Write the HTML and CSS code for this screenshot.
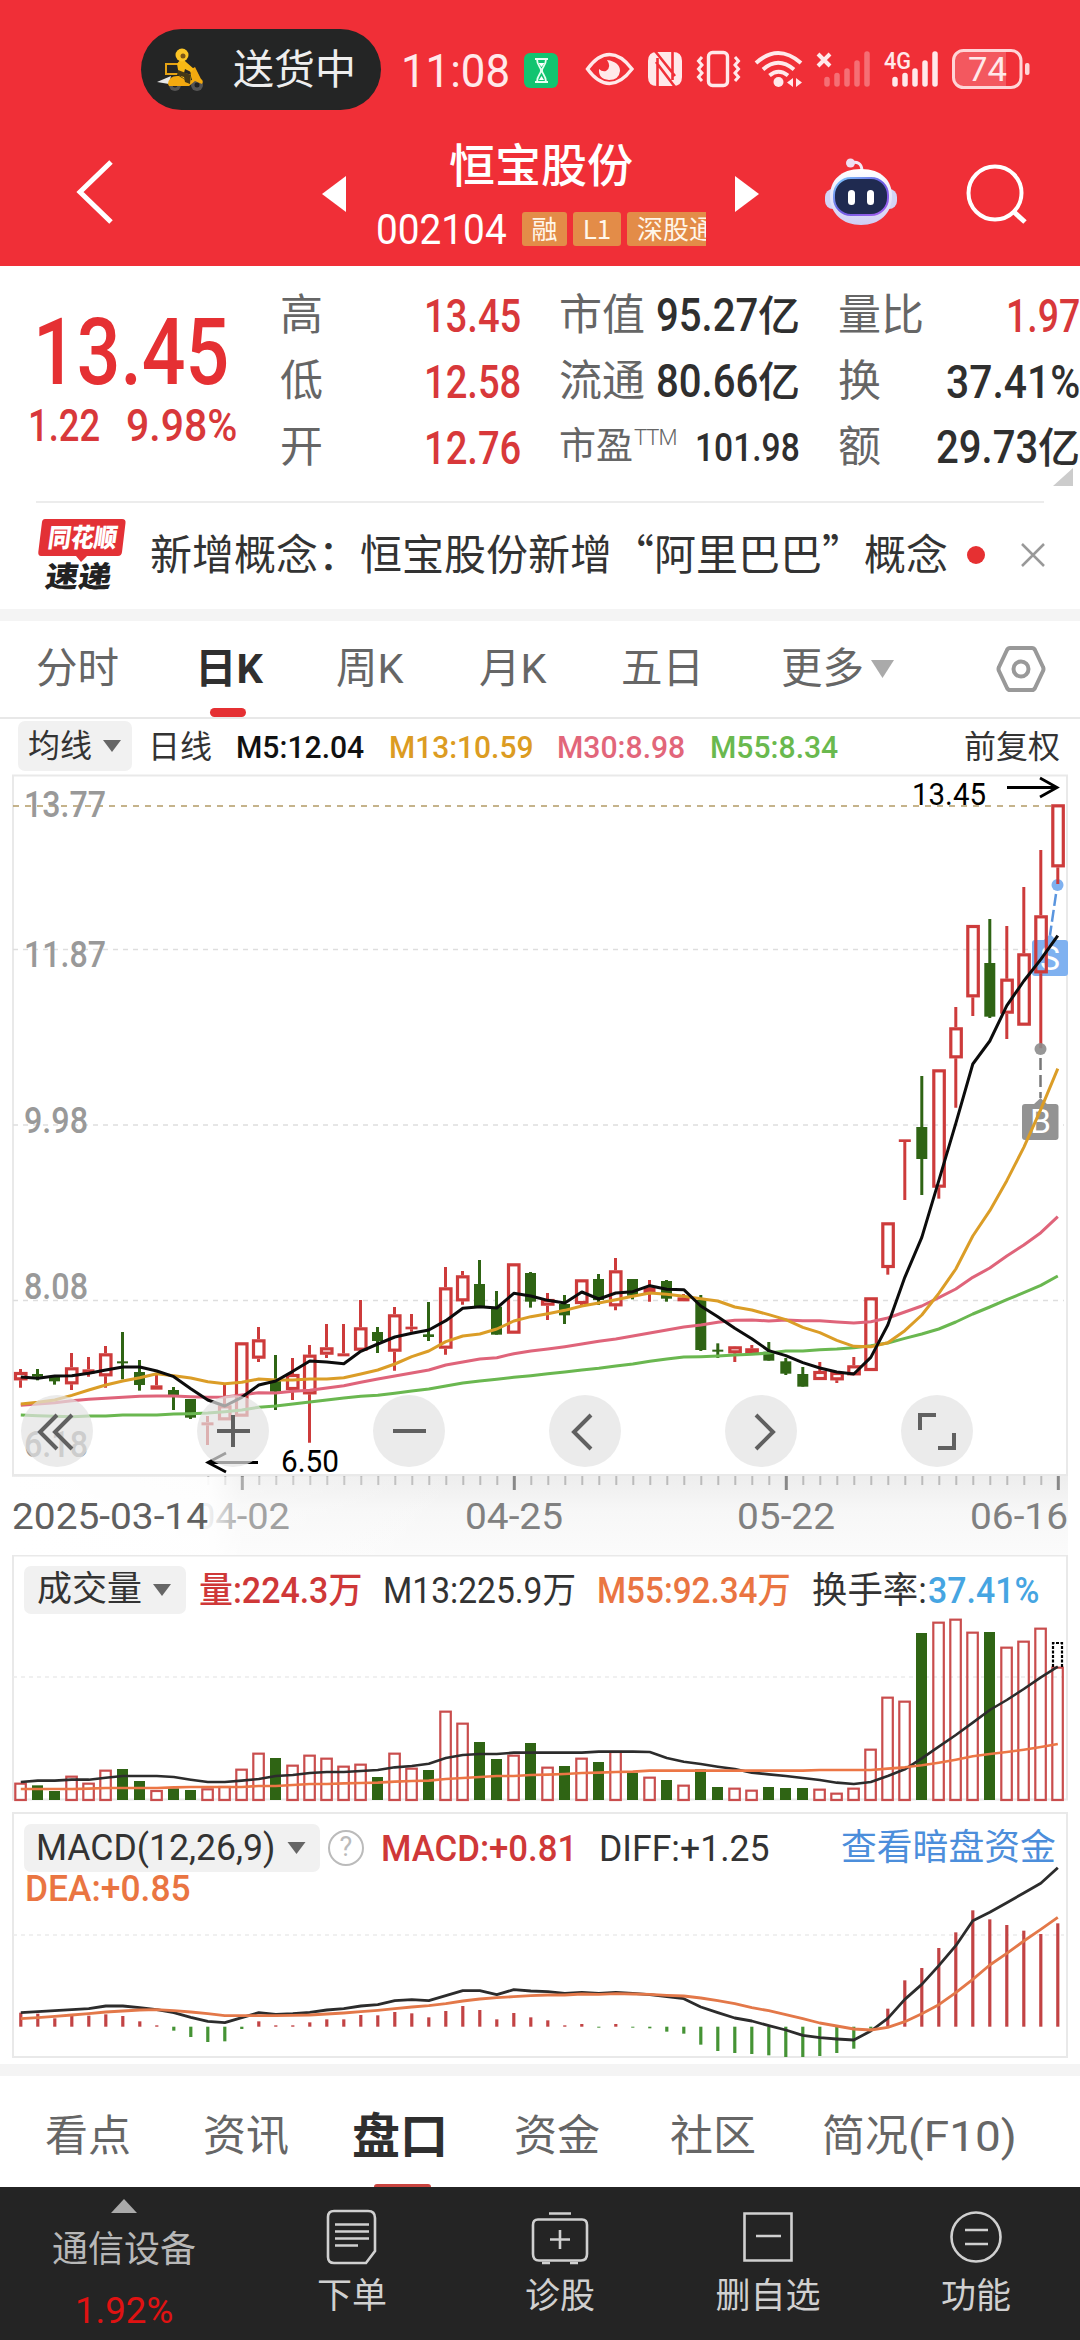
FILE: index.html
```html
<!DOCTYPE html>
<html lang="zh-CN">
<head>
<meta charset="utf-8">
<title>恒宝股份 002104</title>
<link rel="stylesheet" href="styles.css">
</head>
<body>
<header class="header">
  <div class="status">
    <div class="pill">
      <svg width="48" height="44" viewBox="0 0 48 44">
        <path d="M0 34 L14 28 L12 36 Z" fill="#e8e8e8"/>
        <circle cx="18" cy="37" r="6" fill="#555"/><circle cx="40" cy="37" r="6" fill="#555"/>
        <circle cx="18" cy="37" r="2.5" fill="#222"/><circle cx="40" cy="37" r="2.5" fill="#222"/>
        <path d="M9 16 H22 V26 H9 Z" fill="none" stroke="#e5a314" stroke-width="2"/>
        <path d="M11 36 Q12 27 22 28 L30 33 L35 32 L33 22 L38 19 L44 31 Q47 33 45 36 L38 33 L32 38 H12 Z" fill="#f3a90f"/>
        <path d="M20 16 Q25 8 29 14 L37 21 L34 24 L28 21 L27 25 L35 27 L33 35 L22 27 Z" fill="#f8b915"/>
        <path d="M21 22 L34 27 L33 36 L28 34 L27 29 L20 27 Z" fill="#443817"/>
        <circle cx="25" cy="7" r="6.5" fill="#fcc526"/><circle cx="26" cy="8" r="2.5" fill="#7d5718"/>
      </svg>
      <span>送货中</span>
    </div>
    <span class="clock" data-w="109">11:08</span>
    <svg class="sysicons" width="520" height="81" viewBox="524 29 520 81" fill="none" stroke="#ffe9ea" stroke-width="3.4">
      <rect x="524" y="53" width="34" height="35" rx="6" fill="#12c470" stroke="none"/>
      <path d="M535 59 H548 M535 82 H548 M537 59 C537 66 541 67 541 70.500 C541 74 537 75 537 82 M546 59 C546 66 542 67 542 70.500 C542 74 546 75 546 82" stroke-width="1.800" stroke="#e8fff2"/>
      <path d="M539 80 L541.500 76 L544 80Z M538.500 63 H544.500 L541.500 67Z" fill="#fff" stroke="none"/>
      <path d="M587.500 69 Q598 54.500 609.500 54.500 Q621 54.500 632 69 Q621 83.500 609.500 83.500 Q598 83.500 587.500 69 Z"/>
      <path d="M607 60 Q620 62 620 71 Q619 80 609 80 Q598 79 599 69 Q602 72 606 71 Q612 67 607 60 Z" fill="#ffe9ea" stroke="none"/>
      <path d="M657 52 H673 Q682 52 682 61 V77 Q682 86 673 86 H657 Q648 86 648 77 V61 Q648 52 657 52Z" fill="#ffe9ea" stroke="none"/>
      <path d="M657.500 87 V58 M672.500 51 V80 M655 51 L675 76 M656 62 L675 87" stroke="#f02f37" stroke-width="2.600"/>
      <rect x="708.500" y="52.500" width="19" height="33" rx="4"/>
      <path d="M702 57 L698.500 61 L702 65 L698.500 69 L702 73 L698.500 77 L702 81 M735 57 L738.500 61 L735 65 L738.500 69 L735 73 L738.500 77 L735 81" stroke-width="3"/>
      <path d="M756 63 Q778 43 801 63 M763 69.500 Q778 56 794 69.500 M769.500 75.500 Q778.500 68 788 75.500" stroke-width="4"/>
      <circle cx="778.500" cy="82" r="5" fill="#ffe9ea" stroke="none"/>
      <path d="M793 78 V87 L787 82.500Z M796 78 L802 82.500 L796 87Z" fill="#ffe9ea" stroke="none"/>
      <path d="M818 54 L830 66 M830 54 L818 66" stroke-width="4"/>
      <path d="M827 79.500 V84 M837 75.500 V84 M847 71 V84 M857 63 V84 M867 54 V84" stroke-width="5.500" stroke-linecap="round" opacity=".35"/>
      <path d="M895 79.500 V84 M905 75.500 V84 M915 71 V84 M925 63 V84 M935 54 V84" stroke-width="5.500" stroke-linecap="round"/>
      <text x="884" y="69" class="t-net" textLength="27" lengthAdjust="spacingAndGlyphs">4G</text>
      <path d="M965 51 H1006 V87 H965 Q954 87 954 76 V62 Q954 51 965 51Z" fill="#fff" fill-opacity=".2" stroke="none"/>
      <rect x="953.500" y="50.500" width="67.500" height="37" rx="10" stroke-width="3" stroke="#ffd5d7"/>
      <rect x="1025" y="63" width="4.500" height="12" rx="2" fill="#ffd5d7" stroke="none"/>
      <text x="968" y="81" class="t-bat" textLength="39" lengthAdjust="spacingAndGlyphs">74</text>
    </svg>
  </div>
  <div class="titlebar">
    <svg class="back" width="40" height="66" viewBox="0 0 40 66"><path d="M36 3 L5 33 L36 63" fill="none" stroke="#fff" stroke-width="5"/></svg>
    <svg class="prev" width="24" height="36" viewBox="0 0 24 36"><path d="M24 0 V36 L0 18Z" fill="#fff"/></svg>
    <div class="stock">
      <h1>恒宝股份</h1>
      <div class="codes">
        <span class="code" data-w="131">002104</span>
        <span class="badge b1">融</span><span class="badge b2">L1</span><span class="badge b3">深股通</span>
      </div>
    </div>
    <svg class="next" width="24" height="36" viewBox="0 0 24 36"><path d="M0 0 V36 L24 18Z" fill="#fff"/></svg>
    <svg class="robot" width="74" height="68" viewBox="0 0 74 68">
      <defs>
        <linearGradient id="shell" x1="0" y1="0" x2="0" y2="1"><stop offset="0" stop-color="#fff"/><stop offset="1" stop-color="#cfcdf4"/></linearGradient>
        <linearGradient id="rim" x1="0" y1="0" x2="1" y2="1"><stop offset="0" stop-color="#7fd0ff"/><stop offset=".5" stop-color="#6a5be0"/><stop offset="1" stop-color="#a660f0"/></linearGradient>
      </defs>
      <path d="M26 5 Q37 2 38 12" fill="none" stroke="#f4e9f7" stroke-width="3"/>
      <circle cx="26.500" cy="5" r="4.500" fill="#efdff2"/>
      <rect x="1" y="31" width="72" height="20" rx="8" fill="#d3d4f5"/>
      <path d="M37 11 C58 11 68 23 68 38 C68 56 55 67 37 67 C19 67 6 56 6 38 C6 23 16 11 37 11Z" fill="url(#shell)"/>
      <rect x="10" y="20" width="54" height="37" rx="17" fill="#1f2a50" stroke="url(#rim)" stroke-width="2"/>
      <rect x="24" y="32" width="7" height="15" rx="3.500" fill="#fff"/><rect x="43" y="32" width="7" height="15" rx="3.500" fill="#fff"/>
    </svg>
    <svg class="search" width="62" height="62" viewBox="0 0 62 62" fill="none" stroke="#fff" stroke-width="4"><circle cx="29" cy="30" r="26.500"/><path d="M48 49 L59 59" stroke-width="5"/></svg>
  </div>
</header>

<section class="quote">
  <div class="price">
    <div class="last"><span data-w="196">13.45</span></div>
    <div class="chg"><span data-w="72">1.22</span><span data-w="111">9.98%</span></div>
  </div>
  <div class="qcol">
    <div class="qrow"><label>高</label><span class="v up" data-w="97">13.45</span></div>
    <div class="qrow"><label>低</label><span class="v up" data-w="97">12.58</span></div>
    <div class="qrow"><label>开</label><span class="v up" data-w="97">12.76</span></div>
  </div>
  <div class="qcol">
    <div class="qrow"><label>市值</label><span class="v"><i data-w="102">95.27</i>亿</span></div>
    <div class="qrow"><label>流通</label><span class="v"><i data-w="102">80.66</i>亿</span></div>
    <div class="qrow"><label class="pe">市盈<sup>TTM</sup></label><span class="v sm" data-w="105">101.98</span></div>
  </div>
  <div class="qcol">
    <div class="qrow"><label>量比</label><span class="v up" data-w="74">1.97</span></div>
    <div class="qrow"><label>换</label><span class="v" data-w="134">37.41%</span></div>
    <div class="qrow"><label>额</label><span class="v"><i data-w="102">29.73</i>亿</span></div>
  </div>
  <svg class="corner" width="20" height="18" viewBox="0 0 20 18"><path d="M20 0 V18 H0Z" fill="#ccc"/></svg>
</section>

<section class="news">
  <svg class="logo" width="88" height="74" viewBox="0 0 88 74">
    <path d="M7 1 H84 Q88 1 87.500 5 L84 34 Q83.500 38 80 38 H49 L43 44 L38 38 H3 Q0 38 .3 34 L4 4 Q4.500 1 7 1Z" fill="#e33136"/>
    <g transform="skewX(-8)"><text x="13" y="29" class="t-logo" textLength="69" lengthAdjust="spacingAndGlyphs">同花顺</text>
    <text x="16" y="69" class="t-logo2" textLength="66" lengthAdjust="spacingAndGlyphs">速递</text></g>
  </svg>
  <p>新增概念：恒宝股份新增“阿里巴巴”概念</p>
  <i class="dot"></i>
  <svg class="close" width="24" height="24" viewBox="0 0 24 24"><path d="M1 1 L23 23 M23 1 L1 23" stroke="#999" stroke-width="2.500"/></svg>
</section>

<nav class="tabs">
  <a>分时</a><a class="on">日K</a><a>周K</a><a>月K</a><a>五日</a>
  <a>更多<svg width="23" height="18" viewBox="0 0 23 18"><path d="M0 0 H23 L11.500 18Z" fill="#aaa"/></svg></a>
  <svg class="hex" width="50" height="48" viewBox="0 0 50 48" fill="none" stroke="#999" stroke-width="4"><path d="M14 3 H36 Q38 3 39 5 L47 22 Q48 24 47 26 L39 43 Q38 45 36 45 H14 Q12 45 11 43 L3 26 Q2 24 3 22 L11 5 Q12 3 14 3Z"/><circle cx="25" cy="24" r="7.500"/></svg>
</nav>

<div class="malist">
  <span class="chip">均线<svg width="18" height="12" viewBox="0 0 18 12"><path d="M0 0 H18 L9 12Z" fill="#666"/></svg></span>
  <span class="day">日线</span>
  <span class="k" data-w="128">M5:12.04</span>
  <span class="o" data-w="144">M13:10.59</span>
  <span class="p" data-w="128">M30:8.98</span>
  <span class="g" data-w="128">M55:8.34</span>
  <span class="adj">前复权</span>
</div>

<section class="stack kline">
  <svg id="kline" width="1080" height="784" viewBox="0 771 1080 784"></svg>
  <div class="tools">
    <button><svg viewBox="0 0 72 72"><path d="M36 20 L19 37 L36 54 M51 20 L34 37 L51 54"/></svg></button>
    <button><svg viewBox="0 0 72 72"><path d="M20 36 H53 M36 20 V52"/></svg></button>
    <button><svg viewBox="0 0 72 72"><path d="M20 36 H53"/></svg></button>
    <button><svg viewBox="0 0 72 72"><path d="M42 20 L25 37 L42 54"/></svg></button>
    <button><svg viewBox="0 0 72 72"><path d="M31 20 L48 37 L31 54"/></svg></button>
    <button><svg viewBox="0 0 72 72"><path d="M19 35 V20 H35 M53 38 V53 H37"/></svg></button>
  </div>
</section>

<section class="stack vol">
  <svg id="vol" width="1080" height="254" viewBox="0 1555 1080 254"></svg>
  <div class="legend volhead">
    <span class="chip">成交量<svg width="18" height="12" viewBox="0 0 18 12"><path d="M0 0 H18 L9 12Z" fill="#666"/></svg></span>
    <span class="r" data-w="163">量:224.3万</span>
    <span class="d" data-w="193">M13:225.9万</span>
    <span class="or" data-w="194">M55:92.34万</span>
    <span class="d" data-w="115">换手率:</span><span class="b" data-w="111">37.41%</span>
  </div>
</section>

<section class="stack macd">
  <svg id="macd" width="1080" height="255" viewBox="0 1809 1080 255"></svg>
  <div class="machead">
    <div class="legend">
      <span class="chip"><span data-w="239">MACD(12,26,9)</span><svg width="19" height="12" viewBox="0 0 18 12"><path d="M0 0 H18 L9 12Z" fill="#666"/></svg></span>
      <span class="help">?</span>
      <span class="r" data-w="196">MACD:+0.81</span>
      <span class="d" data-w="171">DIFF:+1.25</span>
      <a class="link">查看暗盘资金</a>
    </div>
    <div class="dea"><span data-w="166">DEA:+0.85</span></div>
  </div>
</section>

<nav class="subtabs">
  <a>看点</a><a>资讯</a><a class="on">盘口</a><a>资金</a><a>社区</a><a>简况<span data-w="109">(F10)</span></a>
</nav>

<footer class="bar">
  <div class="sector">
    <svg width="26" height="14" viewBox="0 0 26 14"><path d="M13 0 L26 14 H0Z" fill="#aaa"/></svg>
    <b>通信设备</b>
    <em><span data-w="98">1.92%</span></em>
  </div>
  <div class="act"><svg width="56" height="60" viewBox="0 0 56 60"><path d="M10 4 H44 Q51 4 51 11 V44 L42 56 H10 Q4 56 4 50 V10 Q4 4 10 4Z M11 17.500 H45 M11 24.500 H45 M11 31.500 H45 M11 38.500 H34"/></svg><b>下单</b></div>
  <div class="act"><svg width="60" height="60" viewBox="0 0 60 60"><path d="M8 12.500 H52 Q57 12.500 57 18 V47 Q57 53.500 51 53.500 H9 Q3 53.500 3 47 V18 Q3 12.500 8 12.500Z M19 6.500 H41 M30 23 V42 M20 32.500 H40"/><path d="M12 56 H20 M40 56 H48" stroke-width="3"/></svg><b>诊股</b></div>
  <div class="act"><svg width="56" height="60" viewBox="0 0 56 60"><path d="M4.500 6.500 H51.500 V53.500 H4.500Z M16 29 H41"/></svg><b>删自选</b></div>
  <div class="act"><svg width="56" height="60" viewBox="0 0 56 60"><circle cx="28" cy="30" r="24.500"/><path d="M17 23 H40 M17 37 H40"/></svg><b>功能</b></div>
</footer>
<script src="chart.js"></script>
</body>
</html>
```
FILE: styles.css
```css
* { box-sizing: border-box; margin: 0; padding: 0; }
body { width: 1080px; height: 2340px; overflow: hidden; background: #fff; color: #333; font-family: Roboto, "Noto Sans CJK SC", sans-serif; font-size: 36px; line-height: 48px; }
svg { display: block; flex: none; }
i, em { font-style: normal; }
b { font-weight: 400; }
[data-w] { display: inline-block; white-space: nowrap; flex: none; }
[data-w] > u { display: inline-block; text-decoration: none; transform-origin: 0 50%; }

.header { height: 266px; background: #f02f37; color: #fff; padding-top: 29px; }
.status { display: flex; height: 81px; align-items: center; padding-left: 141px; }
.pill { width: 240px; height: 81px; border-radius: 41px; background: #242525; display: flex; align-items: center; padding-left: 16px; gap: 28px; font-size: 41px; color: #eee; }
.clock { margin-left: 20px; width: 109px; font-size: 47px; color: #ffe9ea; padding-top: 2px; }
.sysicons { margin-left: 14px; }
.t-net { font: 500 24px Roboto, sans-serif; fill: #ffe9ea; stroke: none; }
.t-bat { font: 400 34px Roboto, sans-serif; fill: #ffe9ea; stroke: none; }
.titlebar { display: flex; height: 149px; margin-top: 7px; padding-left: 75px; align-items: center; }
.prev { margin-left: 207px; margin-top: 4px; }
.stock { width: 330px; height: 149px; margin-left: 30px; padding-top: 21px; overflow: hidden; }
h1 { font: 500 46px/48px "Noto Sans CJK SC", sans-serif; text-align: center; }
.codes { display: flex; height: 34px; margin-top: 26px; align-items: center; }
.code { font-size: 42px; line-height: 34px; padding-top: 2px; }
.badge { flex: none; height: 34px; margin-left: 6px; border-radius: 3px; background: #e38c48; font: 26px/32px "Noto Sans CJK SC", sans-serif; text-align: center; color: #fff6ea; }
.b1 { width: 45px; margin-left: 15px; }
.b2 { width: 48px; }
.b3 { width: 98px; }
.next { margin-left: 29px; margin-top: 4px; }
.robot { margin-left: 65px; }
.search { margin-left: 68px; margin-top: 4px; }

.quote { position: relative; height: 235px; display: flex; padding-top: 16px; }
.price { width: 281px; color: #e53033; }
.last { font-size: 93px; line-height: 90px; padding: 26px 0 0 33px; font-weight: 500; }
.chg { display: flex; gap: 26px; padding: 3px 0 0 28px; font-size: 45px; line-height: 50px; color: #d8383a; font-weight: 500; }
.qcol { width: 241px; margin-right: 38px; flex: none; }
.qcol:nth-of-type(4) { margin-right: 0; width: 242px; }
.qrow { display: flex; height: 66px; line-height: 66px; justify-content: space-between; }
.qrow label { font-size: 43px; color: #666; }
.v { font-size: 46px; font-weight: 500; color: #2f2f2f; white-space: nowrap; padding-top: 1px; }
.v.up { color: #d8383a; }
.v:not([data-w]) { font-size: 42px; padding-top: 0; }
.v i { font-size: 46px; }
.v.sm { font-size: 39px; }
.qrow .pe { font-size: 37px; }
.pe sup { font-size: 22px; line-height: 0; vertical-align: 14px; margin-left: 1px; font-weight: 300; letter-spacing: -1px; }
.corner { position: absolute; left: 1053px; top: 202px; }

.news { height: 120px; border-bottom: 12px solid #f4f4f4; display: flex; align-items: center; padding-left: 38px; position: relative; }
.news::before { content: ""; position: absolute; left: 36px; right: 36px; top: 0; height: 2px; background: #ececec; }
.logo { overflow: visible; }
.news p { margin: -7px 0 0 24px; width: 807px; font: 42px/48px "Noto Sans CJK SC", sans-serif; color: #333; white-space: nowrap; }
.dot { width: 18px; height: 18px; border-radius: 50%; background: #e63032; margin-left: 10px; }
.close { margin-left: 36px; }
.t-logo { font: 900 26px "Noto Sans CJK SC", sans-serif; fill: #fff; }
.t-logo2 { font: 900 29px "Noto Sans CJK SC", sans-serif; fill: #222; }

.tabs { display: grid; grid-template-columns: 159px 141px 143px 142px 160px 215px 50px; height: 98px; padding-left: 36px; border-bottom: 2px solid #e8e8e8; font-size: 41.500px; line-height: 96px; color: #666; }
.tabs a { display: flex; align-items: center; gap: 7px; }
.tabs .on { color: #2f2f2f; font-weight: 700; position: relative; }
.tabs .on::after { content: ""; position: absolute; left: 15px; bottom: 0; width: 36px; height: 9px; border-radius: 5px; background: #e53033; }
.hex { align-self: center; }

.malist { display: grid; grid-template-columns: 130px 88px 153px 168px 153px 254px auto; height: 52px; padding: 2px 0 0 18px; font-size: 32px; line-height: 52px; }
.malist .chip { width: 114px; height: 50px; gap: 11px; padding-left: 10px; }
.chip { display: flex; align-items: center; background: #f1f1f1; border-radius: 7px; color: #333; }
.k { color: #111; } .o { color: #dc9c22; } .p { color: #e2667a; } .g { color: #6ab94e; }
.k, .o, .p, .g { font-weight: 500; }
.r { color: #cf3838; } .d { color: #333; } .or { color: #ea7542; } .b { color: #46a5e2; }
.r, .or, .b, .dea { font-weight: 500; }

.stack { display: grid; }
.stack > * { grid-area: 1 / 1; }
.kline { height: 784px; }
.tools { display: flex; gap: 104px; padding: 624px 0 0 21px; align-items: flex-start; }
.tools button { width: 72px; height: 72px; border: 0; border-radius: 50%; background: rgba(227, 227, 227, .7); }
.tools path { fill: none; stroke: #606060; stroke-width: 4; }

.legend { display: flex; height: 48px; padding-left: 24px; line-height: 50px; }
.volhead { margin-top: 11px; }
.volhead .chip { width: 162px; padding-left: 13px; gap: 11px; font-size: 35px; margin-right: 13px; }
.volhead .d, .volhead .or { margin-left: 21px; }
.volhead .b { margin-left: 1px; }
.machead { padding-top: 15px; }
.machead .chip { width: 296px; padding-left: 12px; gap: 12px; }
.help { width: 36px; height: 36px; margin: 6px 17px 0 8px; border: 2.500px solid #bbb; border-radius: 50%; font-size: 27px; line-height: 31px; text-align: center; color: #bbb; }
.machead .d { margin-left: 22px; }
.link { margin-left: 71px; font-size: 35.800px; color: #4c8edb; line-height: 48px; }
.dea { padding-left: 25px; line-height: 34px; color: #ea7542; }

.subtabs { display: grid; grid-template-columns: 158px 149px 162px 156px 152px auto; grid-template-rows: 111px; height: 123px; border-top: 12px solid #f4f4f4; padding-left: 45px; line-height: 121px; font-size: 43px; color: #666; }
.subtabs .on { position: relative; font-size: 48px; font-weight: 700; color: #2f2f2f; }
.subtabs .on::after { content: ""; position: absolute; left: 22px; bottom: 0; width: 57px; height: 3px; background: #c9443f; border-radius: 4px 4px 0 0; }

.bar { display: grid; grid-template-columns: 248px 208px 208px 208px 208px; height: 153px; background: #242424; color: #d0d0d0; font-size: 35px; }
.sector { display: flex; flex-direction: column; align-items: center; padding-top: 12px; color: #b8b8b8; font-size: 36px; }
.sector b { margin-top: 13px; }
.sector em { color: #e01212; margin-top: 13px; font-size: 37px; }
.act { display: flex; flex-direction: column; align-items: center; padding-top: 20px; }
.act path, .act circle { fill: none; stroke: #d0d0d0; stroke-width: 2.600; }
.act b { margin-top: 6px; }

.t-axis { font: 500 36px Roboto, sans-serif; fill: #999; }
.t-date { font: 36px Roboto, sans-serif; fill: #808080; }
.t-date.start { fill: #606060; }
.t-mark { font: 31px Roboto, sans-serif; fill: #000; }
.t-tag { font: 34px Roboto, sans-serif; fill: #fff; }
```
FILE: chart.js
```js
const X = i => 20.8 + 17 * i;
const RED = '#cd3b3b', GREEN = '#2f6414';

// Candles: direction, high, body top, body bottom, low (pixel thirds below y=1200)
const candles = `r507,516,541,563 g507,522,530,541 g531,531,544,554 r459,502,553,570 r471,508,521,530 r438,460,529,563
g396,484,488,538 g480,516,555,572 r525,556,569,569 g561,570,591,630 g597,597,653,657 r648,667,676,735 r555,616,661,661
r427,427,650,650 r381,418,476,486 g465,541,575,630 r474,522,570,600 r435,464,583,728 r372,442,464,474 r372,460,469,469
r300,382,452,452 g381,396,423,459 r321,343,455,512 r342,380,388,395 g306,403,411,423 r201,262,446,464 r213,226,304,314
g180,252,320,320 g273,320,404,404 r190,190,401,401 g216,219,305,323 r279,297,317,360 g285,312,346,372 r238,238,312,320
g222,237,300,315 r174,211,319,331 g237,237,287,298 r240,262,279,305 g240,243,296,305 r282,292,304,304 g285,300,450,453
g430,449,452,474 r438,439,460,486 r435,445,463,463 g426,455,482,482 g474,484,521,525 g501,522,560,560 r486,513,540,540
r513,516,541,549 r471,496,526,526 r292,292,513,513 r67,67,204,224 r-182,-182,-174,0 g-372,-219,-123,-15
r-392,-392,-37,-4 r-579,-518,-425,-277 r-825,-825,-608,-552 g-843,-711,-550,-546 r-822,-664,-559,-483
r-939,-740,-523,-523 r-1050,-854,-680,-455 r-1187,-1187,-998,-948`.split(/\s+/)
  .map(s => [s[0], ...s.slice(1).split(',').map(v => 1200 + v / 3)]);

const ma5 = [531,535,528,527,520,510,501,501,513,530,566,600,618,592,555,543,514,483,486,491,454,432,411,400,390,362,325,320,324,280,288,301,309,276,297,279,275,257,268,269,318,350,385,416,452,467,488,504,516,522,472,375,232,112,-58,-230,-408,-477,-583,-657,-722,-793];
const ma13 = [612,607,600,586,570,555,543,533,521,527,534,545,551,547,537,540,540,537,537,533,522,510,492,470,453,425,408,402,387,363,350,341,331,318,309,299,289,279,283,289,296,303,321,330,344,359,382,398,421,439,440,428,392,345,280,207,108,32,-58,-158,-272,-394];
const ma30 = [616,612,608,602,598,595,592,589,588,588,590,592,591,585,578,579,574,571,564,557,547,537,528,519,510,495,486,477,473,461,453,447,440,432,424,417,408,399,390,381,375,367,361,360,363,360,362,362,366,369,365,354,336,318,293,267,232,204,168,135,98,50];
const ma55 = [645,647,649,650,648,648,645,645,645,642,641,639,635,630,622,618,612,606,600,594,589,586,580,573,567,558,549,543,538,532,527,521,516,510,505,498,492,484,477,471,470,468,465,463,459,453,453,449,447,443,437,429,415,402,387,366,342,321,299,278,256,228];

const svgText = (x, y, w, cls, s) =>
  `<text x="${x}" y="${y}" class="${cls}" textLength="${w}" lengthAdjust="spacingAndGlyphs">${s}</text>`;
const line = (pts, color, w) =>
  `<polyline points="${pts.map(p => p.join(',')).join(' ')}" fill="none" stroke="${color}" stroke-width="${w}" stroke-linejoin="round"/>`;
const series = (a, y0) => a.map((v, i) => [X(i), y0 + v / 3]);
const frame = (y1, y2) => `<rect x="13" y="${y1}" width="1054" height="${y2 - y1}" fill="none" stroke="#e9e9e9" stroke-width="2"/>`;
const dash = (y, c, d) => `<path d="M13 ${y} H1064" stroke="${c}" stroke-width="1.6" stroke-dasharray="${d}"/>`;

// K line
let s = `<defs>
<linearGradient id="band" x1="0" y1="0" x2="0" y2="1"><stop offset="0" stop-color="#ededed"/><stop offset=".45" stop-color="#f7f7f7"/><stop offset="1" stop-color="#fbfbfb"/></linearGradient>
<linearGradient id="fade" gradientUnits="userSpaceOnUse" x1="12" y1="0" x2="470" y2="0"><stop offset="0" stop-color="#fff"/><stop offset=".43" stop-color="#fff" stop-opacity=".9"/><stop offset=".5" stop-color="#fff" stop-opacity=".3"/><stop offset="1" stop-color="#fff" stop-opacity="0"/></linearGradient></defs>`;
s += `<rect x="12" y="1475" width="1056" height="80" fill="url(#band)"/>`;
s += frame(775.5, 1475);
s += dash(806, '#b39b66', '6 6') + [949.5, 1125, 1300.5].map(y => dash(y, '#dedede', '5 5')).join('');
[['13.77', 817], ['11.87', 967], ['9.98', 1133], ['8.08', 1299], ['6.18', 1457]].forEach(([t, y]) => {
  s += svgText(24, y, t.length > 4 ? 82 : 64, 't-axis', t);
});
for (let i = 11; i < 62; i++) {
  const major = [13, 29, 45, 61].includes(i);
  s += `<path d="M${X(i) + .5} 1476 V${major ? 1490 : 1485}" stroke="${major ? '#888' : '#bbb'}" stroke-width="${major ? 3 : 2}"/>`;
}
s += svgText(194, 1529, 96, 't-date', '04-02');
s += `<rect x="12" y="1477" width="458" height="78" fill="url(#fade)"/>`;
s += svgText(12, 1529, 196, 't-date start', '2025-03-14');
s += svgText(465, 1529, 98, 't-date', '04-25') + svgText(737, 1529, 98, 't-date', '05-22') + svgText(970, 1529, 98, 't-date', '06-16');
// Buy and sell tags under the candles
s += `<g fill="#7fb1f0"><rect x="1032" y="940" width="36" height="36" rx="3"/><path d="M1043 941 L1050 934 L1057 941Z"/><circle cx="1057.5" cy="885" r="6"/></g>
<path d="M1056 894 L1050 935" stroke="#5a95de" stroke-width="2.500" stroke-dasharray="12 4"/>
<g fill="#939393"><rect x="1022" y="1104" width="36.500" height="36" rx="3"/><path d="M1033 1105 L1040.500 1098 L1048 1105Z"/></g>
<path d="M1040.500 1058 V1098" stroke="#777" stroke-width="2.500" stroke-dasharray="12 5"/>`;
s += svgText(1040, 970, 20, 't-tag', 'S') + svgText(1030, 1133, 21, 't-tag', 'B');
candles.forEach(([k, h, t, b, l], i) => {
  const x = X(i) - (i < 40 ? .3 : 0), c = k === 'r' ? RED : GREEN;
  if (k === 'g') {
    s += `<path d="M${x} ${h} V${l}" stroke="${c}" stroke-width="3"/><rect x="${x - 5.5}" y="${t}" width="11" height="${Math.max(b - t, 2)}" fill="${c}"/>`;
  } else {
    s += `<path d="M${x} ${h} V${t} M${x} ${b} V${l}" stroke="${c}" stroke-width="3"/>`;
    s += b - t < 6
      ? `<rect x="${x - 6}" y="${t}" width="12" height="${Math.max(b - t, 2.5)}" fill="${c}"/>`
      : `<rect x="${x - 5}" y="${t + 1.5}" width="10.500" height="${b - t - 3}" fill="none" stroke="${c}" stroke-width="3.2"/>`;
  }
});
s += line(series(ma30, 1200), '#df647a', 3) + line(series(ma55, 1200), '#6ab750', 3) + line(series(ma13, 1200), '#db9d27', 3) + line(series(ma5, 1200), '#0c0c0c', 3);
s += `<circle cx="1040.500" cy="1049" r="6" fill="#8c8c8c" opacity=".9"/>`;
s += svgText(912, 805, 74, 't-mark', '13.45') + svgText(281, 1472, 58, 't-mark', '6.50');
s += `<path d="M1007 787.500 H1056 M1040 778 L1057 787.500 L1040 797 M258 1462.500 H209 M226 1453 L208 1462.500 L226 1472" fill="none" stroke="#000" stroke-width="2.800"/>`;
document.getElementById('kline').innerHTML = s;

// Volume
const vols = 'r728 g736 g753 r707 r728 r689 g687 g723 r750 g745 g750 r745 r738 r686 r638 g654 r674 r644 r653 r677 r671 g711 r638 r683 g690 r512 r548 g606 g657 r644 g609 r680 g678 r653 g666 r633 g698 r710 g720 r734 g688 g741 r743 r749 g741 g744 g744 r746 r758 r743 r626 r470 r482 g279 r245 r236 r275 g276 r320 r302 r263 r380'.split(' ');
const vma13 = [726,722,722,719,719,713,708,708,708,711,719,726,726,722,717,708,705,699,696,696,693,690,682,678,671,654,645,642,642,638,638,638,638,638,635,635,635,636,654,665,672,680,687,698,703,708,714,720,728,732,726,708,688,655,620,585,548,510,480,447,412,380];
const vma55 = [747,747,747,747,746,744,744,744,744,742,741,741,741,741,738,738,735,732,732,730,729,728,725,723,722,717,714,711,708,708,705,704,702,699,698,696,695,692,692,692,692,692,692,692,692,692,692,690,690,690,690,686,682,676,668,659,649,642,636,629,621,612];
let v = frame(1555.5, 1799.5) + dash(1677, '#ebebeb', '4 4');
vols.forEach((t, i) => {
  const y = 1540 + t.slice(1) / 3, x = X(i) - .3;
  v += t[0] === 'g'
    ? `<rect x="${x - 5.5}" y="${y}" width="11" height="${1800 - y}" fill="${GREEN}"/>`
    : `<rect x="${x - 5.2}" y="${y + 1}" width="10.500" height="${1799 - y}" fill="none" stroke="#c94d4d" stroke-width="2.200"/>`;
});
v += `<path d="M1053 1667 V1643 H1062 V1667" fill="none" stroke="#000" stroke-width="2.200" stroke-dasharray="3 1.500"/>`;
v += line(series(vma13, 1540), '#2c2c2c', 2.6) + line(series(vma55, 1540), '#ec7645', 2.6);
document.getElementById('vol').innerHTML = v;

// MACD
const hist = [638,641,655,648,647,643,648,664,676,692,711,726,724,687,664,676,676,667,658,658,645,646,636,640,652,633,618,630,658,639,652,661,676,672,683,672,683,685,695,701,734,753,759,762,766,771,771,768,759,746,686,626,541,504,444,397,331,358,375,392,402,370];
const diff = [638,635,632,629,626,618,618,623,629,638,652,664,668,653,638,643,641,637,630,626,618,614,602,599,602,587,572,572,584,569,573,575,580,577,580,577,580,584,590,596,621,638,654,663,677,690,706,713,717,720,693,655,598,553,497,437,362,337,308,279,250,203];
const dea = [656,653,649,645,641,636,633,630,629,632,636,641,647,647,647,647,646,645,642,639,635,631,626,621,617,611,603,597,593,590,587,585,585,582,583,581,582,583,586,588,594,602,611,623,632,644,656,669,678,687,690,682,665,641,614,578,538,495,460,423,388,352];
let m = frame(1813, 2057) + dash(1935, '#ebebeb', '4 4');
hist.forEach((t, i) => {
  m += `<path d="M${X(i)} 2026.700 V${1800 + t / 3}" stroke="${t < 680 ? '#c24344' : '#459335'}" stroke-width="3.2"/>`;
});
m += line(series(diff, 1800), '#2c2c2c', 2.8) + line(series(dea, 1800), '#e37849', 2.8);
document.getElementById('macd').innerHTML = m;

// Condense each figure to the width of its column
document.querySelectorAll('[data-w]').forEach(el => {
  const u = document.createElement('u');
  u.append(...el.childNodes);
  el.append(u);
  const w = +el.dataset.w;
  const natural = u.offsetWidth;
  el.style.width = w + 'px';
  u.style.transform = `scaleX(${w / natural})`;
});
```
